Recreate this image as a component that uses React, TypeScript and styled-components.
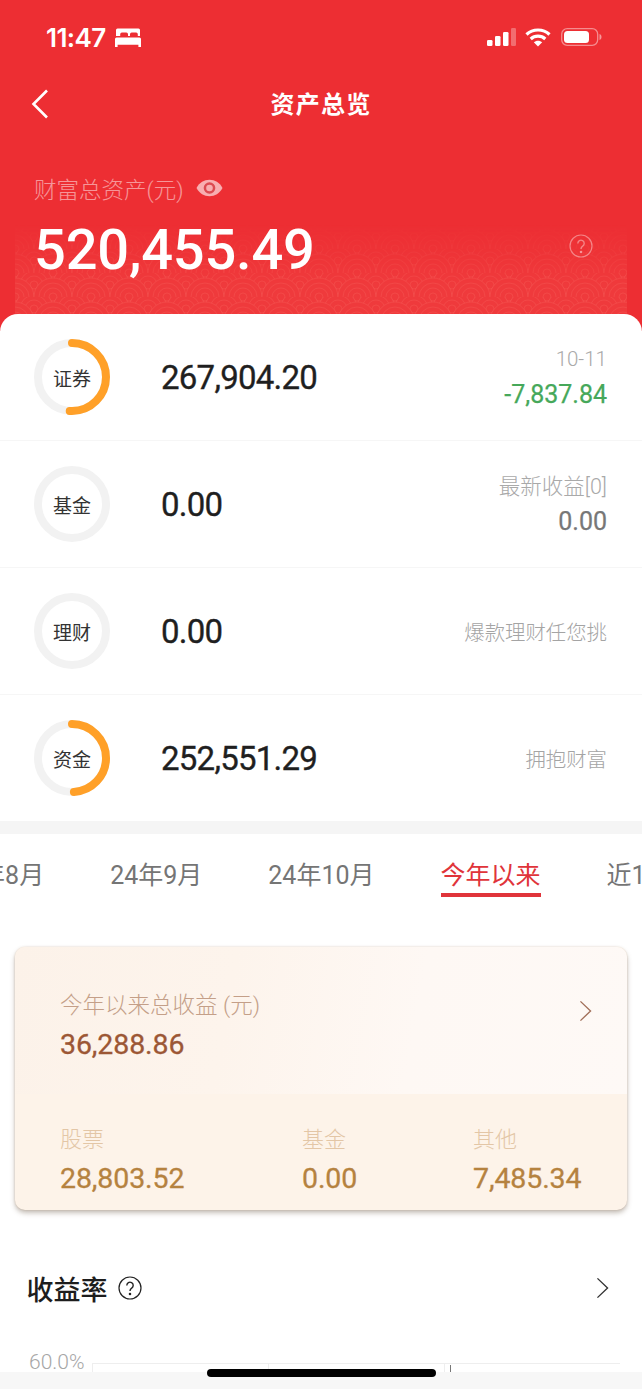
import * as React from 'react';
import styled, { createGlobalStyle } from 'styled-components';

const Global = createGlobalStyle`
  html, body {
    margin: 0;
    padding: 0;
    height: 1389px;
    overflow: hidden;
    background: #fff;
    font-family: Roboto, "Noto Sans CJK SC", sans-serif;
  }
`;

const RED = '#ed2e33';

const Page = styled.div`
  position: relative;
  width: 642px;
  height: 1389px;
  overflow: hidden;
  background: #fff;
`;

const Header = styled.div`
  position: relative;
  height: 331px;
  background: ${RED};
  color: #fff;
  overflow: hidden;
`;

const Pattern = styled.svg`
  position: absolute;
  left: 15px;
  top: 225px;
  width: 612px;
  height: 90px;
  -webkit-mask-image: linear-gradient(to bottom, transparent 0%, #000 65%);
  mask-image: linear-gradient(to bottom, transparent 0%, #000 65%);
`;

const StatusBar = styled.div`
  display: flex;
  align-items: center;
  justify-content: space-between;
  height: 74px;
  padding: 0 40px 0 46px;
`;

const StatusLeft = styled.div`
  display: flex;
  align-items: center;
  gap: 9px;
`;

const Clock = styled.span`
  font-family: Inter, sans-serif;
  font-size: 26px;
  font-weight: 600;
  letter-spacing: -0.6px;
`;

const StatusRight = styled.div`
  display: flex;
  align-items: center;
  gap: 10px;
  svg:first-child {
    margin-right: -1px;
  }
`;

const Nav = styled.div`
  position: relative;
  display: flex;
  align-items: center;
  justify-content: center;
  height: 56px;
`;

const BackBtn = styled.svg`
  position: absolute;
  left: 31px;
  top: 15px;
`;

const NavTitle = styled.div`
  font-size: 24px;
  font-weight: 700;
  letter-spacing: 1.2px;
`;

const TotalLabel = styled.div`
  display: flex;
  align-items: center;
  gap: 12px;
  margin: 41px 0 0 34px;
  height: 34px;
  font-size: 22.5px;
  font-weight: 300;
  color: rgba(255, 255, 255, 0.5);
`;

const TotalRow = styled.div`
  position: relative;
  display: flex;
  align-items: center;
  justify-content: space-between;
  padding: 0 49px 0 34px;
  margin-top: 12px;
  height: 66px;
`;

const TotalValue = styled.div`
  font-size: 56px;
  font-weight: 500;
  letter-spacing: -0.2px;
`;

const TotalHelp = styled.div`
  display: flex;
  margin-bottom: 8px;
`;

const Sheet = styled.div`
  position: relative;
  margin-top: -17px;
  border-radius: 18px 18px 0 0;
  background: #fff;
`;

const Row = styled.div`
  display: grid;
  grid-template-columns: 76px 1fr auto;
  column-gap: 51px;
  align-items: center;
  height: 126px;
  padding: 0 35px 0 34px;
  border-bottom: 1px solid #f6f6f6;
  &:last-child {
    border-bottom: 0;
  }
`;

const Ring = styled.div`
  position: relative;
  width: 76px;
  height: 76px;
  display: flex;
  align-items: center;
  justify-content: center;
  font-size: 19px;
  color: #333;
  svg {
    position: absolute;
    inset: 0;
  }
`;

const Amount = styled.div`
  font-size: 33px;
  font-weight: 400;
  color: #1f1f1f;
  letter-spacing: -0.75px;
  -webkit-text-stroke: 0.35px #1f1f1f;
`;

const Side = styled.div`
  text-align: right;
`;

const SideTop = styled.div`
  font-size: 21.5px;
  line-height: 35px;
  font-weight: 300;
  color: #a9a9a9;
`;

const SideDate = styled(SideTop)`
  font-size: 20.5px;
`;

const SideValue = styled.div<{ $tone?: string }>`
  font-size: 25px;
  line-height: 35px;
  color: ${p => p.$tone || '#777'};
  -webkit-text-stroke: 0.25px ${p => p.$tone || '#777'};
`;

const SideHint = styled.div`
  font-size: 20.4px;
  font-weight: 300;
  color: #a4a4a4;
`;

const Band = styled.div`
  height: 13px;
  background: #f5f5f5;
`;

const Tabs = styled.div`
  display: flex;
  gap: 66px;
  margin-left: -48px;
  padding-top: 26px;
  white-space: nowrap;
`;

const Tab = styled.div<{ $active?: boolean }>`
  flex: none;
  font-size: 25px;
  line-height: 32px;
  height: 32px;
  padding-bottom: 1px;
  color: ${p => (p.$active ? '#e0343a' : '#757575')};
  border-bottom: 4px solid ${p => (p.$active ? '#e0343a' : 'transparent')};
`;

const ProfitCard = styled.div`
  margin: 50px 15px 0;
  height: 263px;
  border-radius: 10px;
  overflow: hidden;
  box-shadow: 0 3px 5px rgba(90, 70, 50, 0.35), 0 0 2px rgba(210, 180, 150, 0.5);
  background: #fdf3e9;
`;

const ProfitTop = styled.div`
  position: relative;
  height: 147px;
  padding: 42px 45px 0;
  box-sizing: border-box;
  background: linear-gradient(100deg, #fcf2e9 0%, #fdf4ec 35%, #fef8f4 65%, #fef9f6 100%);
`;

const ProfitLabel = styled.div`
  font-size: 22.5px;
  line-height: 32px;
  font-weight: 300;
  color: #c49f88;
`;

const ProfitValue = styled.div`
  margin-top: 8px;
  font-size: 28.5px;
  line-height: 32px;
  font-weight: 400;
  letter-spacing: -0.1px;
  color: #9c5735;
  -webkit-text-stroke: 0.3px #9c5735;
`;

const CardChevron = styled.svg`
  position: absolute;
  right: 35px;
  top: 53px;
`;

const ProfitBottom = styled.div`
  display: grid;
  grid-template-columns: 242px 171px 1fr;
  padding: 30px 45px 0;
`;

const PartLabel = styled.div`
  font-size: 22px;
  line-height: 32px;
  font-weight: 300;
  color: #e3c6a6;
`;

const PartValue = styled.div`
  margin-top: 7px;
  font-size: 28.5px;
  line-height: 32px;
  font-weight: 400;
  letter-spacing: -0.1px;
  color: #b5823f;
  -webkit-text-stroke: 0.3px #b5823f;
`;

const SectionHead = styled.div`
  display: flex;
  align-items: center;
  gap: 10px;
  height: 40px;
  margin-top: 58px;
  padding: 0 33px 0 26.5px;
`;

const SectionTitle = styled.div`
  font-size: 27px;
  font-weight: 500;
  color: #1d1d1d;
`;

const SectionChevron = styled.svg`
  margin-left: auto;
`;

const Chart = styled.div`
  display: flex;
  margin-top: 40px;
  padding-left: 29px;
`;

const AxisLabel = styled.div`
  width: 63px;
  font-size: 21px;
  line-height: 28px;
  font-weight: 300;
  color: #a6a6a6;
`;

const Grid = styled.div`
  position: relative;
  display: grid;
  grid-template-columns: repeat(3, 176px);
  margin-top: 15px;
  height: 30px;
  border-top: 1px solid #eee;
`;

const GridCell = styled.div`
  border-left: 1px solid #eee;
  &:last-of-type {
    border-right: 1px solid #eee;
  }
`;

const Cursor = styled.div`
  position: absolute;
  left: 358px;
  top: 1px;
  width: 1px;
  height: 7px;
  background: #777;
`;

const BottomBar = styled.div`
  position: absolute;
  left: 0;
  right: 0;
  bottom: 0;
  height: 17px;
  background: #f7f7f7;
`;

const HomeIndicator = styled.div`
  position: absolute;
  left: 207px;
  top: 1369px;
  width: 229px;
  height: 8px;
  border-radius: 4px;
  background: #000;
`;

function BedIcon() {
  return (
    <svg width="26" height="21" viewBox="0 0 26 21" fill="#fff">
      <path d="M2.5 1.5h21a1.5 1.5 0 0 1 1.5 1.5v6h-2.2V7.2a1.7 1.7 0 0 0-1.7-1.7h-4.4a1.7 1.7 0 0 0-1.7 1.7V9h-2V7.2a1.7 1.7 0 0 0-1.7-1.7H6.900a1.700 1.700 0 0 0-1.700 1.700V9H1V3a1.500 1.500 0 0 1 1.500-1.500z" />
      <path d="M1.500 10.500h23a1.500 1.500 0 0 1 1.500 1.500v8h-2.600v-2.300H2.600V20H0v-8a1.500 1.500 0 0 1 1.500-1.500z" />
    </svg>
  );
}

function SignalIcon() {
  return (
    <svg width="29" height="18" viewBox="0 0 29 18">
      <rect x="0" y="12" width="5.500" height="6" rx="1.300" fill="#fff" />
      <rect x="8" y="8" width="5.500" height="10" rx="1.300" fill="#fff" />
      <rect x="16" y="4" width="5.500" height="14" rx="1.300" fill="#fff" />
      <rect x="24" y="0" width="5" height="18" rx="1.300" fill="#fff" opacity="0.3" />
    </svg>
  );
}

function WifiIcon() {
  return (
    <svg width="26" height="20" viewBox="0 0 26 20" fill="none" stroke="#fff" strokeWidth="3.200">
      <path d="M1.500 7.500C7.800 1.500 18.200 1.500 24.500 7.500" />
      <path d="M5.700 12C9.800 8.200 16.200 8.200 20.300 12" />
      <path d="M13 19.500l-4.200-4.300c2.300-2.100 6.100-2.100 8.400 0z" fill="#fff" stroke="none" />
    </svg>
  );
}

function BatteryIcon() {
  return (
    <svg width="41" height="18" viewBox="0 0 41 18">
      <rect x="0.700" y="0.700" width="36" height="16.600" rx="5.500" fill="none" stroke="#fff" strokeOpacity="0.45" strokeWidth="1.300" />
      <rect x="3" y="3" width="25" height="12" rx="3.500" fill="#fff" />
      <path d="M38.500 6c1.500.5 2 1.700 2 3s-.5 2.500-2 3z" fill="#fff" fillOpacity="0.5" />
    </svg>
  );
}

function EyeIcon() {
  return (
    <svg width="27" height="18" viewBox="0 0 27 18">
      <path d="M0.500 9C3.500 3.500 8 .8 13.500 .8S23.500 3.500 26.500 9c-3 5.500-7.500 8.200-13 8.200S3.500 14.500 0.500 9z" fill="#f8aeb0" />
      <circle cx="13.500" cy="9" r="5.800" fill="#dc4a50" />
      <circle cx="13.500" cy="9" r="3.300" fill="#f8aeb0" />
    </svg>
  );
}

function HelpIcon({ size, color }: { size: number; color: string }) {
  return (
    <svg width={size} height={size} viewBox="0 0 24 24" fill="none" stroke={color} strokeWidth="1.200">
      <circle cx="12" cy="12" r="11" />
      <path d="M8.800 9.400a3.200 3.200 0 1 1 4.900 2.700c-1.100.7-1.700 1.300-1.700 2.800" strokeWidth="1.400" />
      <circle cx="12" cy="18" r="0.700" fill={color} />
    </svg>
  );
}

function Chevron({ as: Comp, color, w, h }: { as: any; color: string; w: number; h: number }) {
  return (
    <Comp width={w} height={h} viewBox="0 0 14 24" fill="none" stroke={color} strokeWidth="1.500">
      <path d="M1.500 1.500L12.500 12L1.500 22.500" />
    </Comp>
  );
}

function AssetRing({ label, percent }: { label: string; percent: number }) {
  const r = 34;
  const len = 2 * Math.PI * r;
  return (
    <Ring>
      <svg width="76" height="76" viewBox="0 0 76 76" fill="none">
        <circle cx="38" cy="38" r={r} stroke="#f2f2f2" strokeWidth="8" />
        {percent > 0 && (
          <circle
            cx="38"
            cy="38"
            r={r}
            stroke="#ffa028"
            strokeWidth="8"
            strokeLinecap="round"
            strokeDasharray={`${(len * percent) / 100} ${len}`}
            transform="rotate(-90 38 38)"
          />
        )}
      </svg>
      {label}
    </Ring>
  );
}

function Scale({ cx, cy }: { cx: number; cy: number }) {
  return (
    <g>
      <circle cx={cx} cy={cy} r={19} fill="#ef3a3c" stroke="#ff8a80" strokeOpacity="0.16" />
      {[14, 9, 4].map(r => (
        <circle key={r} cx={cx} cy={cy} r={r} fill="none" stroke="#ff8a80" strokeOpacity="0.16" />
      ))}
    </g>
  );
}

export default function App() {
  return (
    <Page>
      <Global />
      <Header>
        <Pattern viewBox="0 0 612 90">
          <defs>
            <pattern id="waves" width="38" height="24" patternUnits="userSpaceOnUse">
              <rect width="38" height="24" fill="#ef3a3c" />
              <Scale cx={0} cy={0} />
              <Scale cx={38} cy={0} />
              <Scale cx={19} cy={12} />
              <Scale cx={0} cy={24} />
              <Scale cx={38} cy={24} />
            </pattern>
          </defs>
          <rect width="612" height="90" fill="url(#waves)" />
        </Pattern>
        <StatusBar>
          <StatusLeft>
            <Clock>11:47</Clock>
            <BedIcon />
          </StatusLeft>
          <StatusRight>
            <SignalIcon />
            <WifiIcon />
            <BatteryIcon />
          </StatusRight>
        </StatusBar>
        <Nav>
          <BackBtn width="18" height="30" viewBox="0 0 18 30" fill="none" stroke="#fff" strokeWidth="2.600">
            <path d="M16 1.500L2.500 15L16 28.500" />
          </BackBtn>
          <NavTitle>资产总览</NavTitle>
        </Nav>
        <TotalLabel>
          财富总资产(元)
          <EyeIcon />
        </TotalLabel>
        <TotalRow>
          <TotalValue>520,455.49</TotalValue>
          <TotalHelp>
            <HelpIcon size={24} color="rgba(255,255,255,0.4)" />
          </TotalHelp>
        </TotalRow>
      </Header>

      <Sheet>
        <Row>
          <AssetRing label="证券" percent={51} />
          <Amount>267,904.20</Amount>
          <Side>
            <SideDate>10-11</SideDate>
            <SideValue $tone="#46a85a">-7,837.84</SideValue>
          </Side>
        </Row>
        <Row>
          <AssetRing label="基金" percent={0} />
          <Amount>0.00</Amount>
          <Side>
            <SideTop>最新收益[0]</SideTop>
            <SideValue>0.00</SideValue>
          </Side>
        </Row>
        <Row>
          <AssetRing label="理财" percent={0} />
          <Amount>0.00</Amount>
          <SideHint>爆款理财任您挑</SideHint>
        </Row>
        <Row>
          <AssetRing label="资金" percent={49} />
          <Amount>252,551.29</Amount>
          <SideHint>拥抱财富</SideHint>
        </Row>
      </Sheet>
      <Band />

      <Tabs>
        <Tab>24年8月</Tab>
        <Tab>24年9月</Tab>
        <Tab>24年10月</Tab>
        <Tab $active>今年以来</Tab>
        <Tab>近1年</Tab>
      </Tabs>

      <ProfitCard>
        <ProfitTop>
          <ProfitLabel>今年以来总收益 (元)</ProfitLabel>
          <ProfitValue>36,288.86</ProfitValue>
          <Chevron as={CardChevron} color="#a2705a" w={13} h={22} />
        </ProfitTop>
        <ProfitBottom>
          <div>
            <PartLabel>股票</PartLabel>
            <PartValue>28,803.52</PartValue>
          </div>
          <div>
            <PartLabel>基金</PartLabel>
            <PartValue>0.00</PartValue>
          </div>
          <div>
            <PartLabel>其他</PartLabel>
            <PartValue>7,485.34</PartValue>
          </div>
        </ProfitBottom>
      </ProfitCard>

      <SectionHead>
        <SectionTitle>收益率</SectionTitle>
        <HelpIcon size={24} color="#222" />
        <Chevron as={SectionChevron} color="#333" w={13} h={22} />
      </SectionHead>

      <Chart>
        <AxisLabel>60.0%</AxisLabel>
        <Grid>
          <GridCell />
          <GridCell />
          <GridCell />
          <Cursor />
        </Grid>
      </Chart>

      <BottomBar />
      <HomeIndicator />
    </Page>
  );
}
